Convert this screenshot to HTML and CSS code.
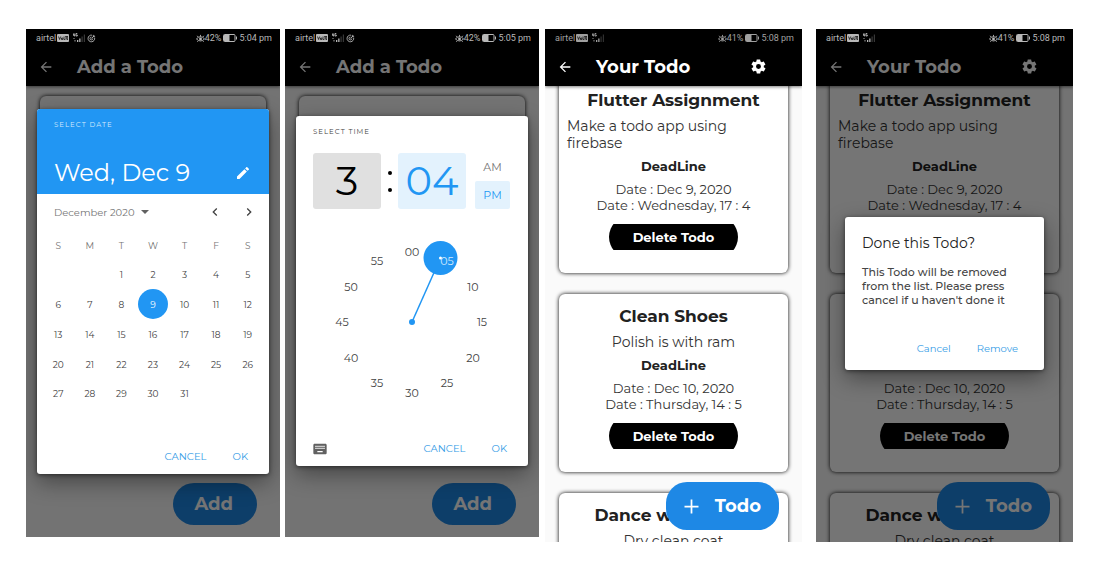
FILE: index.html
```html
<!DOCTYPE html>
<html lang="en">
<head>
<meta charset="utf-8">
<title>Todo app screens</title>
<link rel="stylesheet" href="styles.css">
</head>
<body>
<svg class="sprite" aria-hidden="true">
  <symbol id="back" viewBox="0 0 24 24"><path d="M20 11H7.8l5.6-5.6L12 4l-8 8 8 8 1.4-1.4L7.8 13H20z"/></symbol>
  <symbol id="gear" viewBox="0 0 24 24"><path fill-rule="evenodd" d="M19.4 13c0-.3.1-.6.1-1s0-.7-.1-1l2.100-1.600c.2-.2.2-.4.100-.6l-2-3.500c-.1-.2-.4-.3-.6-.2l-2.500 1c-.5-.4-1.100-.7-1.700-1l-.4-2.600c0-.3-.2-.5-.5-.5h-4c-.2 0-.5.2-.5.400l-.4 2.700c-.6.200-1.100.6-1.700 1l-2.500-1c-.2-.1-.5 0-.6.200l-2 3.500c-.1.200-.1.500.1.600L4.500 11a8 8 0 0 0 0 2l-2.100 1.600c-.2.200-.2.400-.1.600l2 3.500c.1.200.4.300.6.200l2.500-1c.5.400 1.100.7 1.700 1l.4 2.600c0 .3.300.5.5.5h4c.3 0 .5-.2.5-.5l.4-2.600c.6-.3 1.200-.6 1.700-1l2.500 1c.2.100.5 0 .6-.2l2-3.500c.1-.2.1-.5-.1-.6zM12 15.500a3.500 3.500 0 1 1 0-7 3.500 3.500 0 0 1 0 7z"/></symbol>
  <symbol id="pencil" viewBox="0 0 24 24"><path d="M3 17.200V21h3.800L17.800 9.900l-3.700-3.700zM20.700 7c.4-.4.4-1 0-1.400l-2.300-2.300c-.4-.4-1-.4-1.400 0l-1.800 1.800 3.700 3.700z"/></symbol>
  <symbol id="prev" viewBox="0 0 24 24"><path d="M15.400 7.400 14 6l-6 6 6 6 1.400-1.400-4.600-4.600z"/></symbol>
  <symbol id="next" viewBox="0 0 24 24"><path d="M10 6 8.600 7.400l4.600 4.600-4.600 4.600L10 18l6-6z"/></symbol>
  <symbol id="plus" viewBox="0 0 24 24"><path d="M20 13h-7v7h-2v-7H4v-2h7V4h2v7h7z"/></symbol>
  <symbol id="keyboard" viewBox="0 0 24 24"><path fill-rule="evenodd" d="M20 4H4c-1.100 0-2 .9-2 2v12c0 1.100.9 2 2 2h16c1.100 0 2-.9 2-2V6c0-1.100-.9-2-2-2zm-9 3h2v2h-2zm0 3h2v2h-2zM8 7h2v2H8zm0 3h2v2H8zm-1 2H5v-2h2zm0-3H5V7h2zm9 8H8v-2h8zm0-5h-2v-2h2zm0-3h-2V7h2zm3 3h-2v-2h2zm0-3h-2V7h2z"/></symbol>
  <symbol id="volte" viewBox="0 0 12 8"><rect width="12" height="8" rx="1" fill="currentColor"/><path d="M1.500 2.500 2.600 5.500 3.700 2.500M4.500 4h1.400v1.500H4.500zM7 2.500v3h1.200M8.200 2.500h1.700M9 2.500v3M11 2.500H10v3h1M10 4h1" fill="none" stroke="#000" stroke-width=".7"/></symbol>
  <symbol id="signal" viewBox="0 0 14 10"><path d="M1.500.5v2h1.200M2.700.5v3M5.300.500H4v2.500h1.300V2H4.600M3 7v1.500M1.500 5.500h1" fill="none" stroke="currentColor" stroke-width=".9"/><path d="M5 7h1.300v2H5zM7.200 5.500h1.300V9H7.200z" fill="currentColor"/><path d="M9.500 3.500h1.200V9H9.500zM11.800 1.500H13V9h-1.200z" fill="currentColor" opacity=".3"/></symbol>
  <symbol id="target" viewBox="0 0 10 10"><path d="M8.500 4.200A3.700 3.700 0 1 1 5.500 1.300M6.500 5A1.600 1.600 0 1 1 5 3.400M5 5l3.200-3.200M7 1v2h2" fill="none" stroke="currentColor" stroke-width="1"/></symbol>
  <symbol id="eye" viewBox="0 0 10 10"><path d="M.5 5.500Q5 .5 9.500 5.500 5 10 .5 5.500zM5 3V1M2.500 3.500 1.300 2M7.500 3.500 8.700 2M2.500 7.500 1.500 8.700M7.500 7.500l1 1.200" fill="none" stroke="currentColor" stroke-width="1"/><circle cx="5" cy="5.500" r="1.600" fill="currentColor"/></symbol>
  <symbol id="battery" viewBox="0 0 15 8"><rect x=".5" y=".5" width="11.500" height="7" rx="1" fill="none" stroke="currentColor"/><path d="M1 1h5.500v6H1zM13 2.500h1v3h-1z" fill="currentColor"/></symbol>
</svg>

<main class="gallery">
  <section class="phone" aria-label="Select date">
    <div class="status">
      <span>airtel</span><svg class="i-volte"><use href="#volte"/></svg><svg class="i-signal"><use href="#signal"/></svg><svg class="i-small"><use href="#target"/></svg>
      <span class="status-right"><svg class="i-small"><use href="#eye"/></svg>42%<svg class="i-battery"><use href="#battery"/></svg>5:04 pm</span>
    </div>
    <header class="appbar"><button class="icon-button" aria-label="Back"><svg><use href="#back"/></svg></button><h1>Add a Todo</h1></header>
    <div class="screen"><div class="card blank"></div></div>
    <button class="fab">Add</button>
    <div class="scrim">
      <div class="dialog picker" role="dialog" aria-label="Select date">
        <div class="date-head">
          <p class="overline">SELECT DATE</p>
          <div class="date-line"><h2>Wed, Dec 9</h2><button class="icon-button" aria-label="Edit"><svg><use href="#pencil"/></svg></button></div>
        </div>
        <div class="month">
          <button class="month-name">December 2020 <span class="caret"></span></button>
          <button class="icon-button" aria-label="Previous month"><svg><use href="#prev"/></svg></button>
          <button class="icon-button" aria-label="Next month"><svg><use href="#next"/></svg></button>
        </div>
        <table class="calendar">
          <thead><tr><th>S</th><th>M</th><th>T</th><th>W</th><th>T</th><th>F</th><th>S</th></tr></thead>
          <tbody>
            <tr><td></td><td></td><td>1</td><td>2</td><td>3</td><td>4</td><td>5</td></tr>
            <tr><td>6</td><td>7</td><td>8</td><td><span class="chosen">9</span></td><td>10</td><td>11</td><td>12</td></tr>
            <tr><td>13</td><td>14</td><td>15</td><td>16</td><td>17</td><td>18</td><td>19</td></tr>
            <tr><td>20</td><td>21</td><td>22</td><td>23</td><td>24</td><td>25</td><td>26</td></tr>
            <tr><td>27</td><td>28</td><td>29</td><td>30</td><td>31</td><td></td><td></td></tr>
          </tbody>
        </table>
        <div class="actions date-actions"><button>CANCEL</button><button>OK</button></div>
      </div>
    </div>
  </section>

  <section class="phone" aria-label="Select time">
    <div class="status">
      <span>airtel</span><svg class="i-volte"><use href="#volte"/></svg><svg class="i-signal"><use href="#signal"/></svg><svg class="i-small"><use href="#target"/></svg>
      <span class="status-right"><svg class="i-small"><use href="#eye"/></svg>42%<svg class="i-battery"><use href="#battery"/></svg>5:05 pm</span>
    </div>
    <header class="appbar"><button class="icon-button" aria-label="Back"><svg><use href="#back"/></svg></button><h1>Add a Todo</h1></header>
    <div class="screen"><div class="card blank"></div></div>
    <button class="fab">Add</button>
    <div class="scrim">
      <div class="dialog picker" role="dialog" aria-label="Select time">
        <p class="overline time-title">SELECT TIME</p>
        <div class="time">
          <button class="digits">3</button>
          <span class="colon"><i></i><i></i></span>
          <button class="digits active">04</button>
          <div class="period"><button>AM</button><button class="active">PM</button></div>
        </div>
        <svg class="clock" viewBox="0 0 176 176" role="img" aria-label="Minutes dial">
          <path class="hand" d="M88 88 116.500 24"/>
          <circle class="knob" cx="88" cy="88" r="3"/>
          <circle class="knob" cx="116.500" cy="24" r="17"/>
          <circle cx="116.500" cy="24" r="1.500" fill="#fff"/>
          <text x="88" y="22">00</text><text class="on" x="123" y="31">05</text><text x="149" y="57">10</text><text x="158" y="92">15</text>
          <text x="149" y="128">20</text><text x="123" y="153">25</text><text x="88" y="163">30</text><text x="53" y="153">35</text>
          <text x="27" y="128">40</text><text x="18" y="92">45</text><text x="27" y="57">50</text><text x="53" y="31">55</text>
        </svg>
        <div class="actions time-actions"><button class="icon-button keys" aria-label="Keyboard input"><svg><use href="#keyboard"/></svg></button><button>CANCEL</button><button>OK</button></div>
      </div>
    </div>
  </section>

  <section class="phone tall" aria-label="Todo list">
    <div class="status soft">
      <span>airtel</span><svg class="i-volte"><use href="#volte"/></svg><svg class="i-signal"><use href="#signal"/></svg>
      <span class="status-right"><svg class="i-small"><use href="#eye"/></svg>41%<svg class="i-battery"><use href="#battery"/></svg>5:08 pm</span>
    </div>
    <header class="appbar"><button class="icon-button" aria-label="Back"><svg><use href="#back"/></svg></button><h1>Your Todo</h1><button class="icon-button settings" aria-label="Settings"><svg><use href="#gear"/></svg></button></header>
    <div class="screen list">
      <article class="card"><h2>Flutter Assignment</h2><p class="desc">Make a todo app using firebase</p><h3>DeadLine</h3><p class="when">Date : Dec 9, 2020<br>Date : Wednesday, 17 : 4</p><button class="delete">Delete Todo</button></article>
      <article class="card"><h2>Clean Shoes</h2><p class="desc">Polish is with ram</p><h3>DeadLine</h3><p class="when">Date : Dec 10, 2020<br>Date : Thursday, 14 : 5</p><button class="delete">Delete Todo</button></article>
      <article class="card"><h2>Dance with Rama</h2><p class="desc">Dry clean coat</p></article>
    </div>
    <button class="fab add"><svg><use href="#plus"/></svg>Todo</button>
  </section>

  <section class="phone tall last" aria-label="Confirm removal">
    <div class="status">
      <span>airtel</span><svg class="i-volte"><use href="#volte"/></svg><svg class="i-signal"><use href="#signal"/></svg>
      <span class="status-right"><svg class="i-small"><use href="#eye"/></svg>41%<svg class="i-battery"><use href="#battery"/></svg>5:08 pm</span>
    </div>
    <header class="appbar"><button class="icon-button" aria-label="Back"><svg><use href="#back"/></svg></button><h1>Your Todo</h1><button class="icon-button settings" aria-label="Settings"><svg><use href="#gear"/></svg></button></header>
    <div class="screen list">
      <article class="card"><h2>Flutter Assignment</h2><p class="desc">Make a todo app using firebase</p><h3>DeadLine</h3><p class="when">Date : Dec 9, 2020<br>Date : Wednesday, 17 : 4</p><button class="delete">Delete Todo</button></article>
      <article class="card"><h2>Clean Shoes</h2><p class="desc">Polish is with ram</p><h3>DeadLine</h3><p class="when">Date : Dec 10, 2020<br>Date : Thursday, 14 : 5</p><button class="delete">Delete Todo</button></article>
      <article class="card"><h2>Dance with Rama</h2><p class="desc">Dry clean coat</p></article>
    </div>
    <button class="fab add"><svg><use href="#plus"/></svg>Todo</button>
    <div class="scrim">
      <div class="dialog alert" role="alertdialog" aria-labelledby="done-title">
        <h2 id="done-title">Done this Todo?</h2>
        <p>This Todo will be removed from the list. Please press cancel if u haven't done it</p>
        <div class="actions alert-actions"><button>Cancel</button><button>Remove</button></div>
      </div>
    </div>
  </section>
</main>
</body>
</html>
```
FILE: styles.css
```css
* { box-sizing: border-box; }

body {
  margin: 0;
  background: #fff;
  color: #212121;
  font-family: Montserrat, Inter, "Open Sans", sans-serif;
}

h1, h2, h3, p { margin: 0; }

button {
  margin: 0;
  padding: 0;
  border: 0;
  background: none;
  color: inherit;
  font: inherit;
  white-space: nowrap;
}

.sprite { position: absolute; width: 0; height: 0; }

/* Each column after the first includes the space on its left */
.gallery {
  display: grid;
  grid-template-columns: 254fr 259fr 263fr 271fr;
  align-items: start;
  padding: 29px 25px 30px 26px;
}

.phone {
  position: relative;
  display: flex;
  flex-direction: column;
  aspect-ratio: 254 / 508;
  min-height: 0;
  overflow: hidden;
  background: #fafafa;
}

.phone.tall { aspect-ratio: 257 / 513; }
.phone + .phone { margin-left: 5px; }
.phone + .tall { margin-left: 6px; }
.phone + .last { margin-left: 14px; }

/* Status bar */
.status {
  position: relative;
  z-index: 3;
  display: flex;
  flex: none;
  align-items: center;
  height: 18px;
  padding: 0 8px 0 10px;
  background: #000;
  color: #b8b8b8;
  font: 9px/18px Roboto, sans-serif;
}

.status.soft { color: #a0a0a0; }
.status svg { flex: none; }
.status-right { display: flex; align-items: center; margin-left: auto; white-space: nowrap; }
.i-volte { width: 12px; height: 8px; margin: 0 3px 0 1px; }
.i-signal { width: 14px; height: 10px; }
.i-small { width: 9px; height: 9px; }
.i-signal + .i-small { margin-left: 1px; }
.i-battery { width: 15px; height: 8px; margin: 0 1px 0 2px; }

/* App bar */
.appbar {
  position: relative;
  z-index: 1;
  display: flex;
  flex: none;
  align-items: center;
  gap: 23px;
  height: 39px;
  padding: 0 35px 0 12px;
  background: #000;
  box-shadow: 0 1px 3px rgba(0, 0, 0, .5);
  color: #fff;
}

.appbar h1 { font-size: 18px; font-weight: 700; line-height: 24px; white-space: nowrap; }
.icon-button { display: grid; flex: none; place-items: center; }
.icon-button svg { width: 16px; height: 16px; fill: currentColor; }
.settings { margin-left: auto; }
.settings svg { width: 17px; height: 17px; }

/* Todo cards */
.screen { flex: 1; min-height: 0; padding: 10px 14px; }
.screen.list { display: flex; flex-direction: column; gap: 21px; padding-top: 0; margin-top: -8px; }

.card {
  display: flex;
  flex: none;
  flex-direction: column;
  align-items: center;
  gap: 6px;
  padding: 11px 8px 23px;
  border-radius: 6px;
  background: #fff;
  box-shadow: 0 0 4px #000;
}

.card.blank { min-height: 340px; background: #fafafa; }
.card h2 { font-size: 17px; font-weight: 700; line-height: 23px; }
.card h3 { font-size: 13px; font-weight: 700; line-height: 17px; }
.desc { font-size: 14px; line-height: 17px; }
.when { font-size: 13px; line-height: 16px; text-align: center; }
.desc, .when { color: #333; }

.delete {
  position: relative;
  z-index: 0;
  width: 129px;
  height: 26px;
  margin-top: 5px;
  overflow: hidden;
  color: #fff;
  font-size: 13px;
  font-weight: 700;
}

.delete::before {
  position: absolute;
  z-index: -1;
  inset: -8px 0;
  border-radius: 21px;
  background: #000;
  content: "";
}

.fab {
  position: absolute;
  z-index: 1;
  right: 23px;
  bottom: 12px;
  height: 42px;
  padding: 0 24px 0 21px;
  border-radius: 21px;
  background: #1e88e5;
  color: #fff;
  font-size: 18px;
  font-weight: 700;
}

.fab.add { display: flex; align-items: center; gap: 13px; height: 48px; padding: 0 18px 0 15px; }
.fab svg { width: 21px; height: 21px; fill: currentColor; }

/* Dialogs */
.scrim {
  position: absolute;
  z-index: 2;
  inset: 0;
  display: grid;
  align-items: center;
  padding: 16px 11px 0;
  background: rgba(0, 0, 0, .54);
}

.dialog {
  border-radius: 3px;
  background: #fff;
  box-shadow: 0 8px 22px rgba(0, 0, 0, .4), 0 1px 4px rgba(0, 0, 0, .5);
}

.picker { overflow: hidden; }
.overline { font-size: 7px; line-height: 10px; letter-spacing: 1px; }
.actions { display: flex; align-items: center; justify-content: flex-end; color: #369de6; font-size: 10px; line-height: 16px; }

.date-head { padding: 11px 18px 5px 17px; background: #2196f3; color: #fff; }
.date-head .overline { color: #d3eafd; }
.date-line { display: flex; align-items: center; justify-content: space-between; margin-top: 27px; }
.date-line h2 { font-size: 24px; font-weight: 400; line-height: 32px; white-space: nowrap; }

.month { display: flex; align-items: center; gap: 18px; height: 37px; padding: 0 12px 0 17px; color: #424242; }
.month-name { display: flex; align-items: center; gap: 6px; margin-right: auto; color: #757575; font-size: 10px; }
.caret { border: 4px solid transparent; border-top-color: #616161; border-bottom-width: 0; }

.calendar { width: calc(100% - 11px); height: 178px; margin: 0 auto; border-spacing: 0; table-layout: fixed; color: #424242; font-size: 9px; text-align: center; }
.calendar th { color: #757575; font-weight: 400; }
.calendar th, .calendar td { height: 29px; padding: 0; }
.chosen { display: grid; place-items: center; width: 30px; height: 30px; margin: 0 auto; border-radius: 50%; background: #2196f3; color: #fff; }

.date-actions { gap: 26px; padding: 40px 21px 9px; }

.time-title { padding: 11px 17px 0; color: #424242; }
.time { display: flex; padding: 16px 18px 0 17px; }
.digits { flex: 1; height: 56px; border-radius: 3px; background: #e0e0e0; color: #000; font-size: 40px; line-height: 56px; font-weight: 400; }
.active { background: #e3f2fd; color: #2196f3; }
.colon { display: flex; flex-direction: column; align-items: center; justify-content: center; gap: 13px; width: 17px; }
.colon i { width: 4px; height: 4px; border-radius: 50%; background: #000; }
.period { display: flex; flex-direction: column; justify-content: space-between; width: 35px; margin-left: 9px; color: #757575; font-size: 11px; }
.period button { height: 28px; border-radius: 2px; }
.period .active { color: #2196f3; }

.clock { display: block; width: 176px; height: 176px; margin: 25px auto 0; overflow: visible; }
.clock text { fill: #424242; font-size: 11px; text-anchor: middle; }
.clock .on { fill: #d3eafd; }
.knob { fill: #2196f3; }
.hand { stroke: #2196f3; stroke-width: 1.5; }

.time-actions { gap: 26px; padding: 31px 21px 9px 16px; }
.keys { margin-right: auto; color: #616161; }

.alert { margin: 0 18px; padding: 17px 17px 13px; }
.alert h2 { font-size: 14px; font-weight: 400; line-height: 18px; }
.alert p { margin-top: 13px; font-size: 11px; font-weight: 500; line-height: 14px; color: #444; }
.alert-actions { gap: 26px; margin-top: 34px; padding-right: 9px; }
```
